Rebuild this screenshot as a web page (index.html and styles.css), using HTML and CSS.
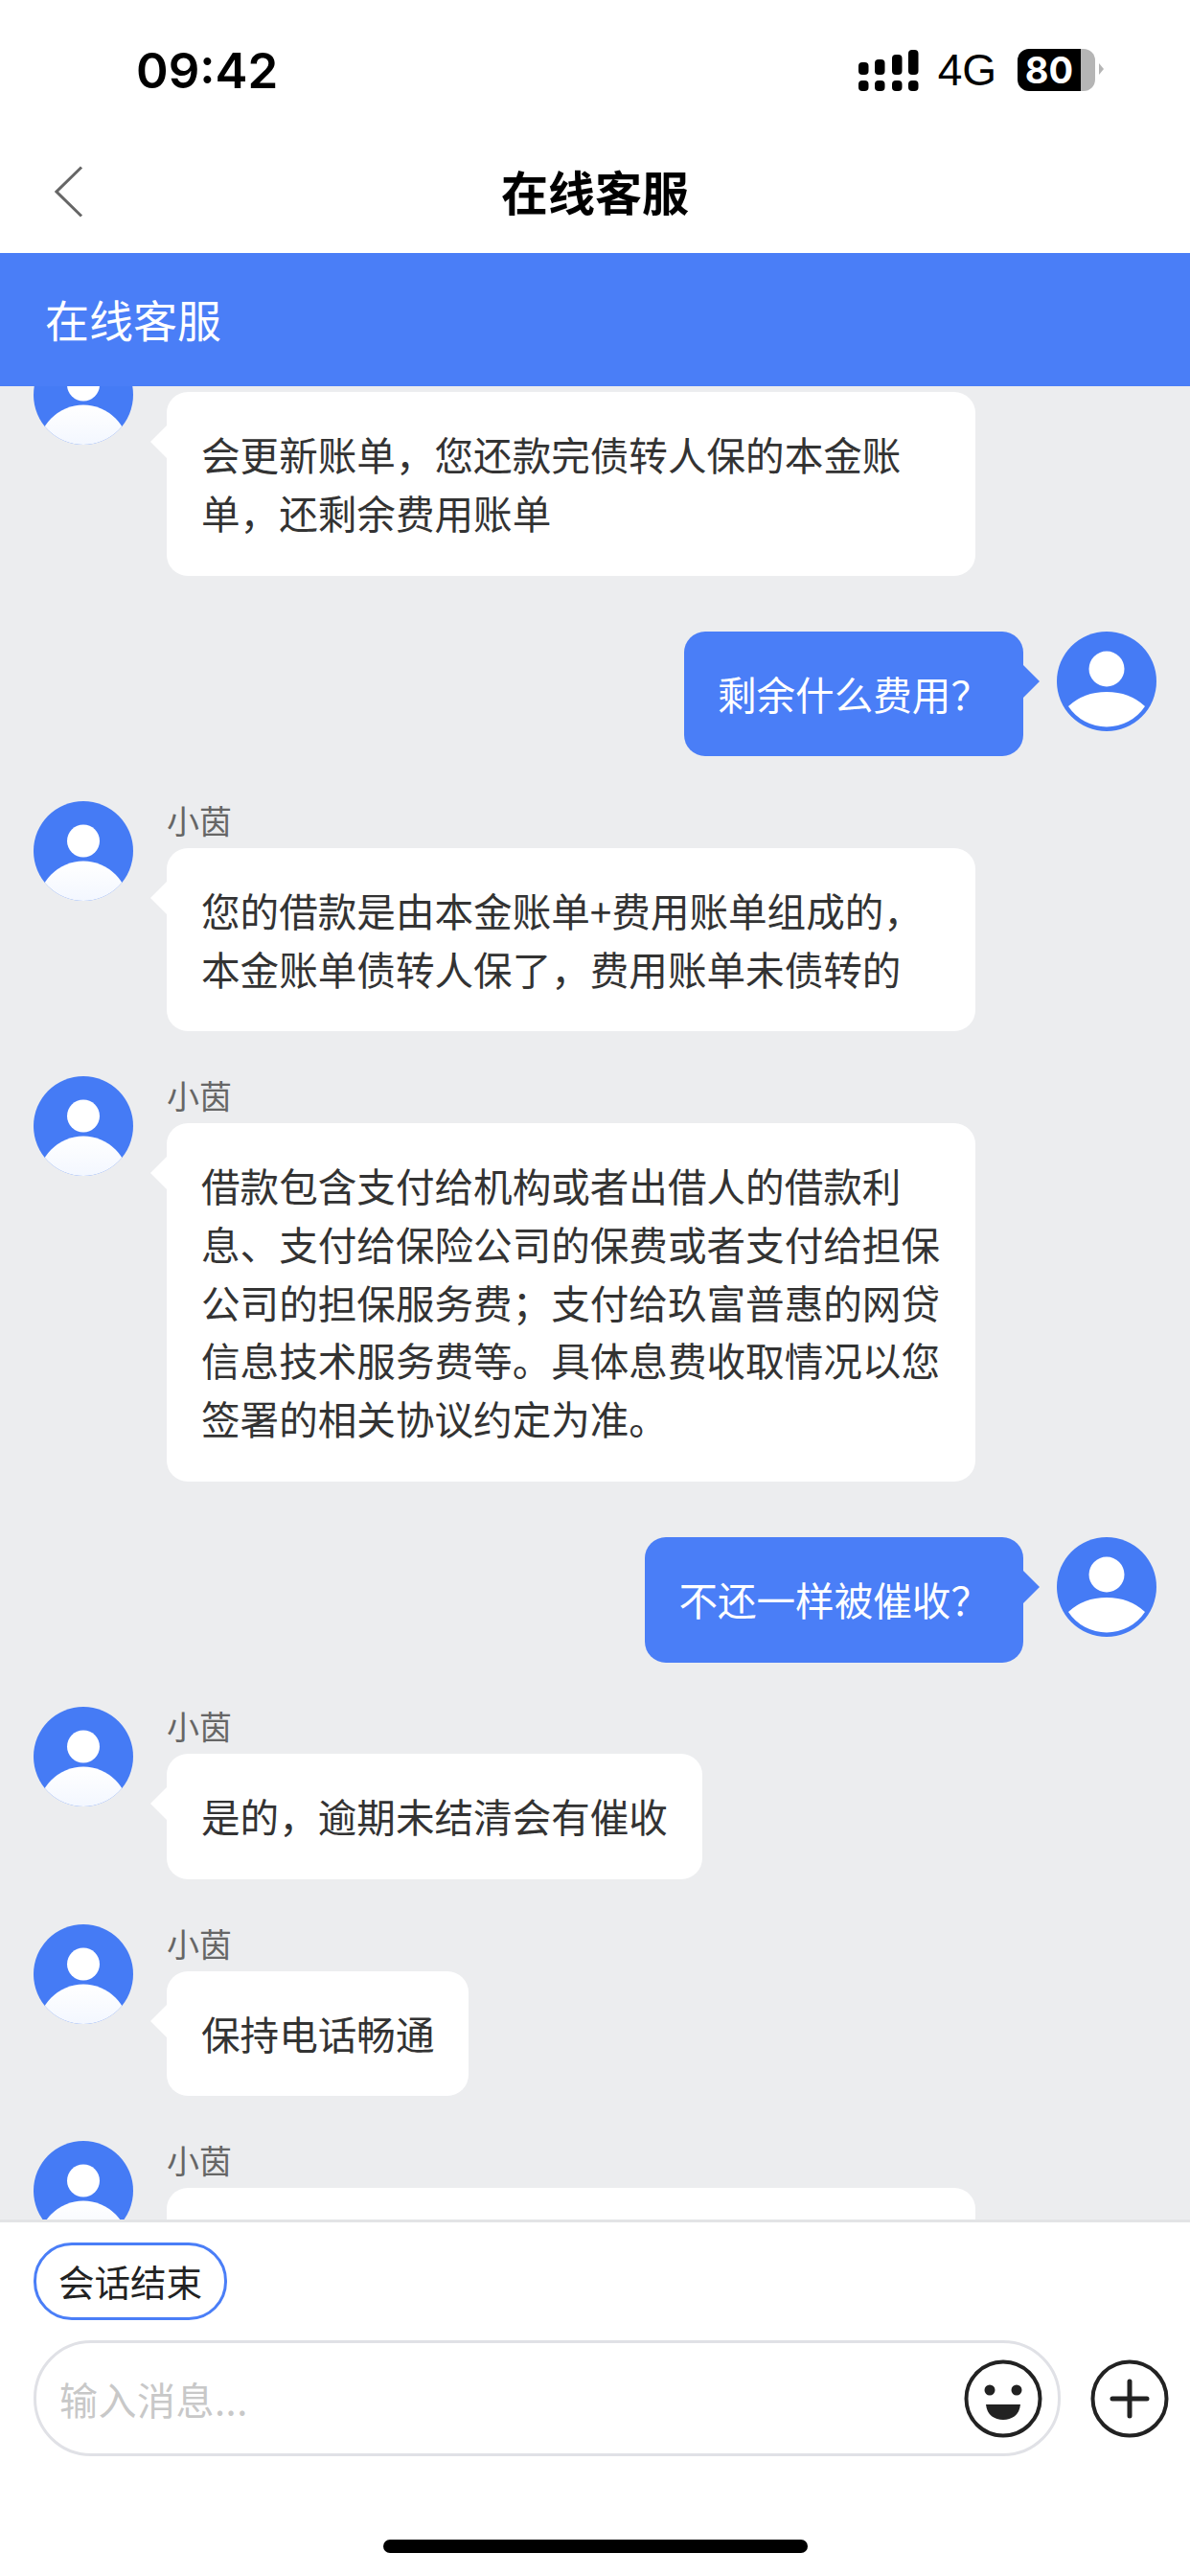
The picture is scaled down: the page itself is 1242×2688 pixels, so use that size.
FILE: index.html
```html
<!DOCTYPE html>
<html lang="zh-CN">
<head>
    <meta charset="UTF-8">
    <meta name="viewport" content="width=device-width, initial-scale=1.0">
    <title>在线客服</title>
    <link rel="stylesheet" href="styles.css">
</head>
<body>
    <svg class="defs" width="0" height="0">
        <defs>
            <linearGradient id="bodyFill" x1="0" y1="0" x2="0" y2="1">
                <stop offset="0" stop-color="#ffffff"/>
                <stop offset="1" stop-color="#e4edff"/>
            </linearGradient>
            <clipPath id="avatarClip"><circle cx="52" cy="52" r="52"/></clipPath>
            <symbol id="avatar" viewBox="0 0 104 104">
                <circle cx="52" cy="52" r="52" fill="#457bf5"/>
                <circle cx="52" cy="41.5" r="17" fill="#fff"/>
                <circle cx="52" cy="110" r="47.4" fill="url(#bodyFill)" clip-path="url(#avatarClip)"/>
            </symbol>
            <symbol id="avatarMe" viewBox="0 0 104 104">
                <circle cx="52" cy="52" r="52" fill="#457bf5"/>
                <circle cx="52" cy="39" r="18.5" fill="#fff"/>
                <path d="M12 78 Q28 63 52 63 Q76 63 92 78 A48 48 0 0 1 12 78 Z" fill="#fff"/>
            </symbol>
        </defs>
    </svg>

    <div class="status-bar">
        <span class="time">09:42</span>
        <div class="status-right">
            <svg class="signal" width="63" height="43" viewBox="0 0 63 43">
                <rect x="0" y="13" width="10.5" height="13" rx="4"/>
                <rect x="17" y="10" width="10.5" height="16" rx="4"/>
                <rect x="35" y="5" width="10.5" height="21" rx="4"/>
                <rect x="52" y="0" width="10.5" height="26" rx="4"/>
                <rect x="0" y="32" width="10.5" height="11" rx="4"/>
                <rect x="17" y="32" width="10.5" height="11" rx="4"/>
                <rect x="35" y="32" width="10.5" height="11" rx="4"/>
                <rect x="52" y="32" width="10.5" height="11" rx="4"/>
            </svg>
            <span class="network">4G</span>
            <div class="battery">
                <span class="battery-level">80</span>
                <span class="battery-tip"></span>
            </div>
        </div>
    </div>

    <div class="nav-bar">
        <svg class="back" width="30" height="54" viewBox="0 0 30 54">
            <path d="M28 1.5 L2 27 L28 52.5" fill="none" stroke="#666" stroke-width="3"/>
        </svg>
        <h1>在线客服</h1>
    </div>

    <div class="chat-header">在线客服</div>

    <div class="messages">
        <div class="msg msg-first">
            <svg class="avatar"><use href="#avatar"/></svg>
            <div class="msg-body">
                <div class="name"></div>
                <div class="bubble bubble-wide">会更新账单&#xFF0C;您还款完债转人保的本金账<br>单&#xFF0C;还剩余费用账单</div>
            </div>
        </div>

        <div class="msg msg-me">
            <div class="bubble bubble-me">剩余什么费用&#xFF1F;</div>
            <svg class="avatar"><use href="#avatarMe"/></svg>
        </div>

        <div class="msg">
            <svg class="avatar"><use href="#avatar"/></svg>
            <div class="msg-body">
                <div class="name">小茵</div>
                <div class="bubble bubble-wide">您的借款是由本金账单+费用账单组成的&#xFF0C;<br>本金账单债转人保了&#xFF0C;费用账单未债转的</div>
            </div>
        </div>

        <div class="msg">
            <svg class="avatar"><use href="#avatar"/></svg>
            <div class="msg-body">
                <div class="name">小茵</div>
                <div class="bubble bubble-wide">借款包含支付给机构或者出借人的借款利<br>息、支付给保险公司的保费或者支付给担保<br>公司的担保服务费&#xFF1B;支付给玖富普惠的网贷<br>信息技术服务费等。具体息费收取情况以您<br>签署的相关协议约定为准。</div>
            </div>
        </div>

        <div class="msg msg-me">
            <div class="bubble bubble-me">不还一样被催收&#xFF1F;</div>
            <svg class="avatar"><use href="#avatarMe"/></svg>
        </div>

        <div class="msg">
            <svg class="avatar"><use href="#avatar"/></svg>
            <div class="msg-body">
                <div class="name">小茵</div>
                <div class="bubble">是的&#xFF0C;逾期未结清会有催收</div>
            </div>
        </div>

        <div class="msg">
            <svg class="avatar"><use href="#avatar"/></svg>
            <div class="msg-body">
                <div class="name">小茵</div>
                <div class="bubble">保持电话畅通</div>
            </div>
        </div>

        <div class="msg">
            <svg class="avatar"><use href="#avatar"/></svg>
            <div class="msg-body">
                <div class="name">小茵</div>
                <div class="bubble bubble-wide bubble-cut"></div>
            </div>
        </div>
    </div>

    <div class="bottom-panel">
        <div class="chip">会话结束</div>
        <div class="input-row">
            <div class="input-box">
                <span class="placeholder">输入消息...</span>
                <svg class="icon" width="82" height="82" viewBox="0 0 82 82">
                    <circle cx="41" cy="41" r="38.5" fill="none" stroke="#222" stroke-width="4"/>
                    <circle cx="27" cy="32" r="5.5" fill="#222"/>
                    <circle cx="55" cy="32" r="5.5" fill="#222"/>
                    <path d="M23 47 H59 C58 58 50 63 41 63 C32 63 24 58 23 47 Z" fill="#222"/>
                </svg>
            </div>
            <svg class="icon" width="82" height="82" viewBox="0 0 82 82">
                <circle cx="41" cy="41" r="38.5" fill="none" stroke="#222" stroke-width="4"/>
                <path d="M41 23 V59 M23 41 H59" fill="none" stroke="#222" stroke-width="5" stroke-linecap="round"/>
            </svg>
        </div>
        <div class="home-indicator"></div>
    </div>
</body>
</html>
```

FILE: styles.css
```css
* {
    box-sizing: border-box;
}
body {
    margin: 0;
    width: 1242px;
    height: 2688px;
    overflow: hidden;
    display: flex;
    flex-direction: column;
    background-color: #fff;
    font-family: "Noto Sans CJK SC", "Liberation Sans", sans-serif;
}
.defs {
    position: absolute;
}

/* status bar */
.status-bar {
    height: 140px;
    flex-shrink: 0;
    display: flex;
    justify-content: space-between;
    align-items: center;
    padding: 6px 99px 0 142px;
}
.time {
    font-family: Inter, "Liberation Sans", sans-serif;
    font-size: 51px;
    font-weight: 600;
    color: #000;
}
.status-right {
    display: flex;
    align-items: center;
}
.signal {
    fill: #000;
    margin-right: 20px;
}
.network {
    font-family: "Liberation Sans", sans-serif;
    font-size: 46px;
    color: #000;
    margin-right: 22px;
}
.battery {
    position: relative;
    width: 81px;
    height: 44px;
    border-radius: 12px;
    background: linear-gradient(to right, #000 66px, #b5b5b5 66px);
}
.battery-level {
    display: block;
    width: 66px;
    font-family: Inter, "Liberation Sans", sans-serif;
    font-size: 38px;
    font-weight: 700;
    line-height: 44px;
    text-align: center;
    color: #fff;
}
.battery-tip {
    position: absolute;
    left: 85px;
    top: 15px;
    border-left: 5px solid #b5b5b5;
    border-top: 6px solid transparent;
    border-bottom: 6px solid transparent;
}

/* nav */
.nav-bar {
    position: relative;
    height: 124px;
    flex-shrink: 0;
    display: flex;
    justify-content: center;
    align-items: center;
    padding-bottom: 8px;
}
.nav-bar h1 {
    margin: 0;
    font-size: 49px;
    font-weight: 700;
    color: #000;
}
.back {
    position: absolute;
    left: 57px;
    top: 33px;
}
.chat-header {
    position: relative;
    z-index: 1;
    height: 139px;
    flex-shrink: 0;
    padding-left: 47px;
    font-size: 46px;
    line-height: 137px;
    color: #fff;
    background-color: #4a7ef7;
}

/* messages */
.messages {
    flex: 1;
    min-height: 0;
    overflow: hidden;
    padding: 0 35px;
    background-color: #ecedef;
}
.msg {
    display: flex;
    gap: 35px;
    margin-top: 46.5px;
}
.msg-first {
    margin-top: -43px;
}
.msg-me {
    justify-content: flex-end;
    margin-top: 58px;
}
.avatar {
    width: 104px;
    height: 104px;
    flex-shrink: 0;
}
.name {
    height: 49px;
    font-size: 34px;
    line-height: 40px;
    color: #666;
}
.bubble {
    position: relative;
    display: inline-block;
    padding: 35px 36px;
    border-radius: 22px;
    font-size: 40.6px;
    line-height: 60.8px;
    white-space: nowrap;
    color: #333;
    background-color: #fff;
}
.bubble::before {
    content: "";
    position: absolute;
    left: -17px;
    top: 35px;
    border-right: 17px solid #fff;
    border-top: 17.5px solid transparent;
    border-bottom: 17.5px solid transparent;
}
.bubble-wide {
    display: block;
    width: 844px;
}
.bubble-me {
    padding: 35px;
    color: #fff;
    background-color: #4a7ef7;
    align-self: flex-start;
}
.bubble-me::before {
    left: auto;
    right: -17px;
    border-right: none;
    border-left: 17px solid #4a7ef7;
}
.bubble-cut {
    height: 192px;
}

/* bottom */
.bottom-panel {
    height: 372px;
    flex-shrink: 0;
    border-top: 3px solid #e3e4e6;
    padding: 21px 22px 0 35px;
    background-color: #fff;
}
.chip {
    display: inline-block;
    height: 81px;
    padding: 0 23px;
    border: 3px solid #4a7ef7;
    border-radius: 40px;
    font-size: 37.5px;
    line-height: 73px;
    color: #222;
}
.input-row {
    display: flex;
    align-items: center;
    gap: 31px;
    margin-top: 21px;
}
.input-box {
    flex: 1;
    height: 121px;
    display: flex;
    align-items: center;
    justify-content: space-between;
    padding: 0 16px 0 24px;
    border: 3px solid #e0e1e6;
    border-radius: 60px;
}
.placeholder {
    font-size: 40px;
    letter-spacing: 0.5px;
    color: #c8c8c8;
}
.icon {
    flex-shrink: 0;
}
.home-indicator {
    width: 443px;
    height: 14px;
    margin: 87px 0 0 365px;
    border-radius: 7px;
    background-color: #000;
}
```
